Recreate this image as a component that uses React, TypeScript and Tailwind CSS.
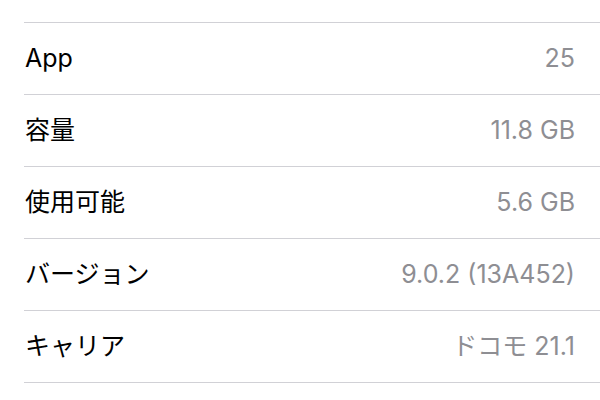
const rows = [
  { label: 'App', value: '25' },
  { label: '容量', value: '11.8 GB' },
  { label: '使用可能', value: '5.6 GB' },
  { label: 'バージョン', value: '9.0.2 (13A452)' },
  { label: 'キャリア', value: 'ドコモ 21.1' },
];

export default function App() {
  return (
    <div
      className="w-[600px] h-[400px] bg-white pt-[22px] pl-[24px] overflow-hidden"
      style={{ fontFamily: 'Inter, "Noto Sans CJK JP", sans-serif' }}
    >
      {rows.map((row) => (
        <div
          key={row.label}
          className="h-[72px] border-t border-[#d1d1d6] flex items-center justify-between pr-[25px] pl-px"
        >
          <span className="text-[25px] text-black">{row.label}</span>
          <span className="text-[25px] text-[#8e8e93]">{row.value}</span>
        </div>
      ))}
      <div className="border-t border-[#d1d1d6]" />
    </div>
  );
}
